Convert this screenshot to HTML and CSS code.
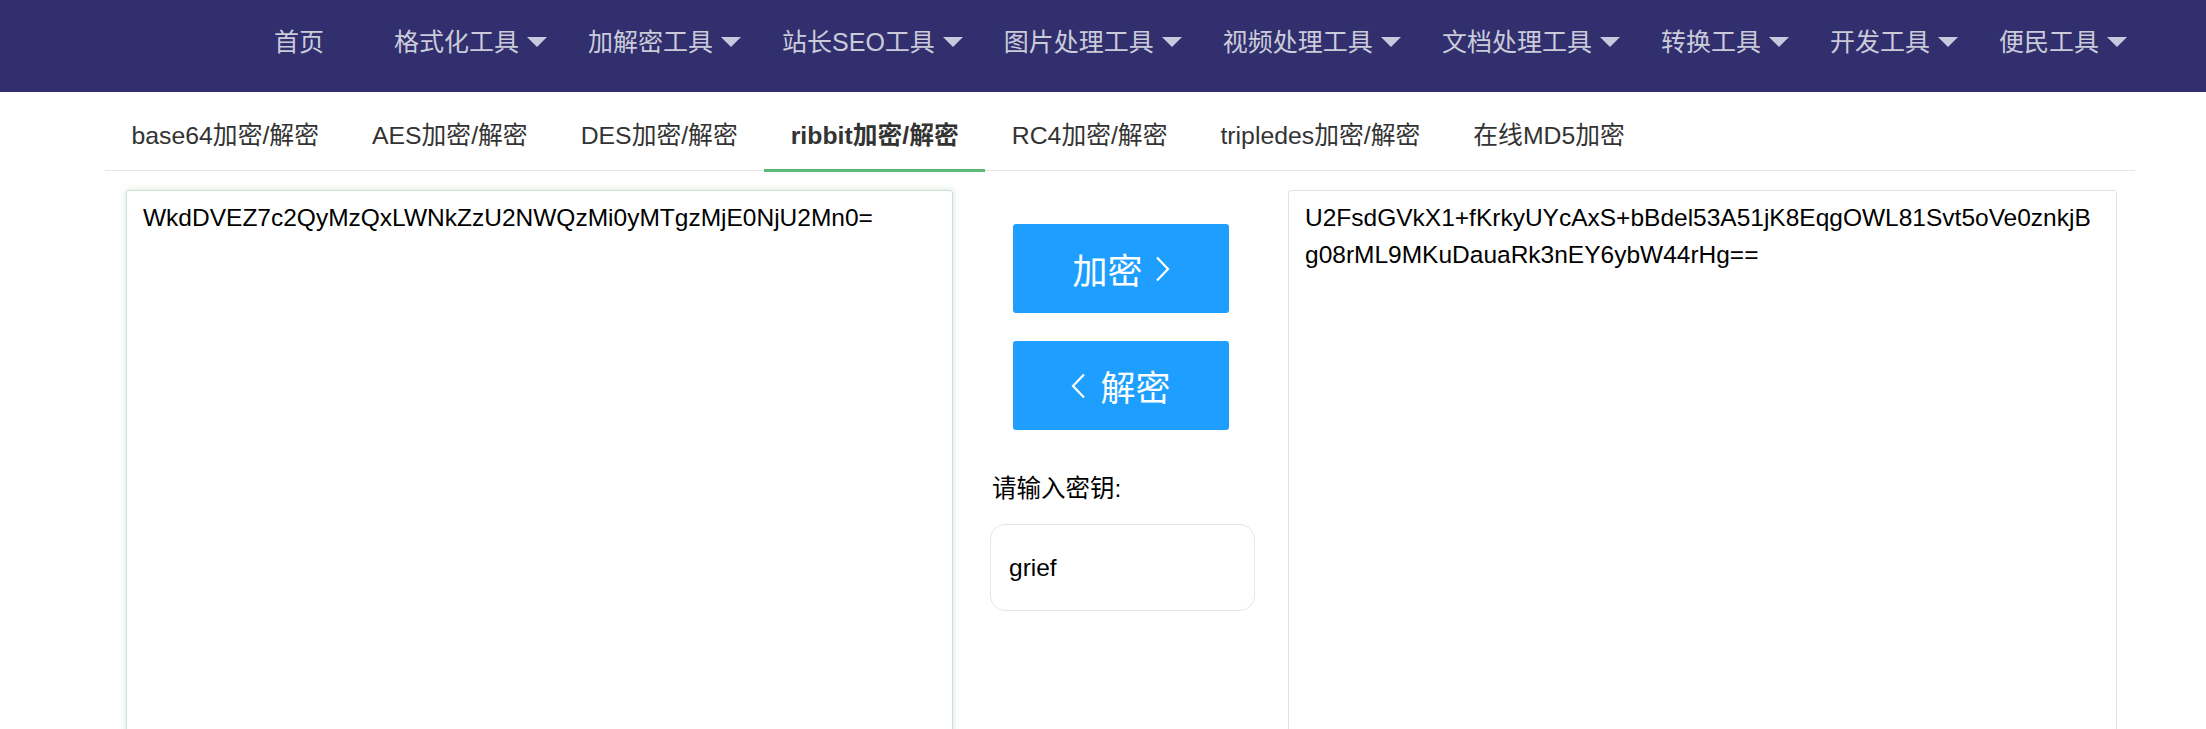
FILE: index.html
```html
<!DOCTYPE html>
<html lang="zh-CN">
<head>
<meta charset="utf-8">
<title>ribbit加密/解密</title>
<link rel="stylesheet" href="styles.css">
</head>
<body>
<header class="header">
  <ul class="nav">
    <li class="nav-item nav-home">首页</li>
    <li class="nav-item">格式化工具<span class="caret"></span></li>
    <li class="nav-item">加解密工具<span class="caret"></span></li>
    <li class="nav-item">站长SEO工具<span class="caret"></span></li>
    <li class="nav-item">图片处理工具<span class="caret"></span></li>
    <li class="nav-item">视频处理工具<span class="caret"></span></li>
    <li class="nav-item">文档处理工具<span class="caret"></span></li>
    <li class="nav-item">转换工具<span class="caret"></span></li>
    <li class="nav-item">开发工具<span class="caret"></span></li>
    <li class="nav-item">便民工具<span class="caret"></span></li>
  </ul>
</header>
<main class="container">
  <ul class="tabs">
    <li class="tab">base64加密/解密</li>
    <li class="tab">AES加密/解密</li>
    <li class="tab">DES加密/解密</li>
    <li class="tab tab-active">ribbit加密/解密</li>
    <li class="tab">RC4加密/解密</li>
    <li class="tab">tripledes加密/解密</li>
    <li class="tab">在线MD5加密</li>
  </ul>
  <div class="workspace">
    <textarea class="box box-focused">WkdDVEZ7c2QyMzQxLWNkZzU2NWQzMi0yMTgzMjE0NjU2Mn0=</textarea>
    <div class="middle">
      <button class="btn"><span>加密</span><svg class="chev" width="15" height="26" viewBox="0 0 15 26"><polyline points="2,1.5 13,13 2,24.5" fill="none" stroke="#fff" stroke-width="2.2"/></svg></button>
      <button class="btn btn-left"><svg class="chev" width="15" height="26" viewBox="0 0 15 26"><polyline points="13,1.5 2,13 13,24.5" fill="none" stroke="#fff" stroke-width="2.2"/></svg><span>解密</span></button>
      <label class="key-label">请输入密钥:</label>
      <input class="key-input" type="text" value="grief">
    </div>
    <textarea class="box box-right">U2FsdGVkX1+fKrkyUYcAxS+bBdel53A51jK8EqgOWL81Svt5oVe0znkjBg08rML9MKuDauaRk3nEY6ybW44rHg==</textarea>
  </div>
</main>
</body>
</html>
```

FILE: styles.css
```css
* { box-sizing: border-box; }
html, body { margin: 0; padding: 0; background: #fff; }
body {
  font-family: "Liberation Sans", Arial, "Noto Sans CJK SC", sans-serif;
  font-size: 24.5px;
  color: #333;
  overflow: hidden;
}
ul { list-style: none; margin: 0; padding: 0; }

.header {
  height: 92px;
  background: #312f6e;
}
.nav {
  display: flex;
  align-items: center;
  height: 80px;
  padding-left: 274px;
  gap: 41px;
}
.nav-item {
  display: flex;
  align-items: center;
  font-size: 25px;
  color: rgba(255, 255, 255, 0.76);
  white-space: nowrap;
}
.nav-home { margin-right: 29px; }
.caret {
  width: 0;
  height: 0;
  margin-left: 8px;
  margin-top: 3px;
  border-left: 10px solid transparent;
  border-right: 10px solid transparent;
  border-top: 10px solid #c8c8de;
}

.container {
  margin-left: 105px;
  width: 2030px;
}
.tabs {
  display: flex;
  height: 79px;
  border-bottom: 1px solid #e6e6e6;
}
.tab {
  position: relative;
  height: 78px;
  padding: 26px 26.5px 0;
  line-height: 36px;
  font-size: 24.8px;
  color: #333;
  white-space: nowrap;
}
.tab-active { font-weight: bold; }
.tab-active::after {
  content: "";
  position: absolute;
  left: 0;
  right: 0;
  bottom: -2px;
  height: 3px;
  background: #5fb878;
}

.workspace {
  display: flex;
  padding: 19px 18px 0 21px;
}
.box {
  height: 620px;
  margin: 0;
  padding: 9px 16px;
  border: 1px solid #e2e2e2;
  border-radius: 3px;
  font-family: "Liberation Sans", Arial, "Noto Sans CJK SC", sans-serif;
  font-size: 24.5px;
  line-height: 1.5;
  color: #000;
  resize: none;
  outline: none;
  background: #fff;
}
.box-focused {
  width: 827px;
  border-color: #d3ddd8;
  box-shadow: 0 0 6px rgba(95, 184, 120, 0.3);
}
.box-right {
  width: 829px;
  word-break: break-all;
}

.middle {
  width: 335px;
  flex: none;
  display: flex;
  flex-direction: column;
  padding: 34px 0 0 37px;
}
.btn {
  display: flex;
  align-items: center;
  justify-content: center;
  gap: 12px;
  width: 216px;
  height: 89px;
  margin: 0 0 28px 23px;
  padding: 0;
  border: none;
  border-radius: 3px;
  background: #1e9fff;
  color: #fff;
  font-family: "Liberation Sans", Arial, "Noto Sans CJK SC", sans-serif;
  font-size: 35px;
  cursor: pointer;
}
.btn-left { gap: 14px; }
.chev { display: block; }
.key-label {
  display: block;
  margin: 13px 0 17px 2px;
  line-height: 36px;
  color: #000;
}
.key-input {
  width: 265px;
  height: 87px;
  padding: 0 18px;
  border: 1px solid #e6e6e6;
  border-radius: 15px;
  font-family: "Liberation Sans", Arial, "Noto Sans CJK SC", sans-serif;
  font-size: 24.5px;
  color: #000;
  outline: none;
}
```
